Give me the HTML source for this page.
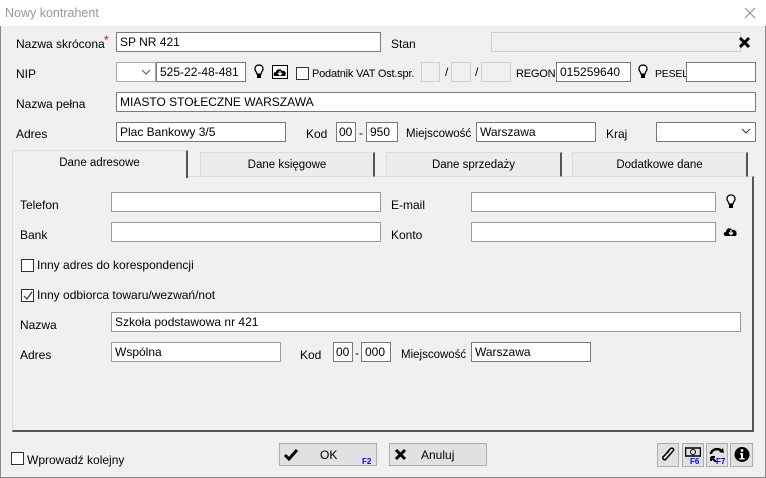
<!DOCTYPE html>
<html><head><meta charset="utf-8"><style>
*{box-sizing:border-box;margin:0;padding:0}
body{width:766px;height:478px;overflow:hidden;background:#f0f0f0;font-family:"Liberation Sans",sans-serif;font-size:12px;color:#000;position:relative}
.a{position:absolute}
.l{position:absolute;white-space:nowrap;line-height:14px}
.i{position:absolute;background:#fff;border:1px solid #7a7a7a;height:20px;font-size:12px;padding:1px 0 0 3px;line-height:16px;white-space:nowrap;overflow:hidden}
.d{position:absolute;background:#f0f0f0;border:1px solid #cfcfcf;height:20px}
.cb{position:absolute;width:13px;height:13px;border:1px solid #333;background:#fff}
.tab{position:absolute;top:152px;height:25px;background:#ececec;border:1px solid #ddd;border-right:2px solid #555;text-align:center;line-height:24px;font-size:11.5px}
.btn{position:absolute;background:#e1e1e1;border:1px solid #adadad}
</style></head><body>
<div class="a" style="left:0;top:0;width:766px;height:26px;background:#fff"></div>
<div class="l" style="left:5px;top:6px;color:#999;font-size:12.5px">Nowy kontrahent</div>
<svg class="a" style="left:744px;top:7px" width="12" height="12"><path d="M1 1L11 11M11 1L1 11" stroke="#888" stroke-width="1"/></svg>
<div class="a" style="left:0;top:26px;width:1px;height:452px;background:#888"></div>
<div class="a" style="left:765px;top:26px;width:1px;height:452px;background:#888"></div>
<div class="a" style="left:0;top:477px;width:766px;height:1px;background:#888"></div>

<div class="l" style="left:16px;top:37px">Nazwa skrócona</div>
<div class="l" style="left:104px;top:33px;color:#e00">*</div>
<div class="i" style="left:116px;top:32px;width:265px">SP NR 421</div>
<div class="l" style="left:391px;top:37px">Stan</div>
<div class="d" style="left:491px;top:32px;width:250px"></div>
<svg class="a" style="left:738px;top:36px" width="13" height="13"><path d="M2 2L11 11M11 2L2 11" stroke="#000" stroke-width="3"/></svg>

<div class="l" style="left:16px;top:67px">NIP</div>
<div class="i" style="left:116px;top:62px;width:40px;border-color:#aaa"></div>
<svg class="a" style="left:141px;top:68px" width="10" height="8"><path d="M1 2L5 6L9 2" stroke="#555" fill="none"/></svg>
<div class="i" style="left:156px;top:62px;width:90px">525-22-48-481</div>
<svg class="a" style="left:254px;top:64px" width="10" height="16"><path d="M5 1C2 1 1 3 1 5C1 7 3 8 3 10H7C7 8 9 7 9 5C9 3 8 1 5 1Z" fill="#fff" stroke="#000" stroke-width="1.3"/><rect x="3" y="10" width="4" height="4" fill="#000"/></svg>
<svg class="a" style="left:272px;top:65px" width="16" height="14"><rect x="0.5" y="0.5" width="15" height="13" fill="#fff" stroke="#000"/><path d="M3 11C1 11 1 7 4 7C4 4 9 3 10 6C13 5 15 8 13 11Z" fill="#000"/><path d="M8 6V10M6 8L8 10L10 8" stroke="#fff" stroke-width="1.3" fill="none"/></svg>
<div class="cb" style="left:296px;top:67px"></div>
<div class="l" style="left:312px;top:67px;font-size:11px;letter-spacing:-0.2px">Podatnik VAT Ost.spr.</div>
<div class="d" style="left:421px;top:62px;width:19px"></div>
<div class="l" style="left:445px;top:65px">/</div>
<div class="d" style="left:451px;top:62px;width:20px"></div>
<div class="l" style="left:475px;top:65px">/</div>
<div class="d" style="left:481px;top:62px;width:30px"></div>
<div class="l" style="left:516px;top:67px;font-size:11px;letter-spacing:-0.2px">REGON</div>
<div class="i" style="left:556px;top:62px;width:75px">015259640</div>
<svg class="a" style="left:638px;top:64px" width="10" height="16"><path d="M5 1C2 1 1 3 1 5C1 7 3 8 3 10H7C7 8 9 7 9 5C9 3 8 1 5 1Z" fill="#fff" stroke="#000" stroke-width="1.3"/><rect x="3" y="10" width="4" height="4" fill="#000"/></svg>
<div class="l" style="left:655px;top:67px;font-size:10.5px;letter-spacing:-0.2px">PESEL</div>
<div class="i" style="left:686px;top:62px;width:70px"></div>

<div class="l" style="left:16px;top:97px">Nazwa pełna</div>
<div class="i" style="left:116px;top:92px;width:640px">MIASTO STOŁECZNE WARSZAWA</div>

<div class="l" style="left:16px;top:127px">Adres</div>
<div class="i" style="left:116px;top:122px;width:170px">Plac Bankowy 3/5</div>
<div class="l" style="left:306px;top:127px">Kod</div>
<div class="i" style="left:336px;top:122px;width:20px;padding-left:2px">00</div>
<div class="l" style="left:359px;top:126px">-</div>
<div class="i" style="left:366px;top:122px;width:32px">950</div>
<div class="l" style="left:406px;top:127px;font-size:11.5px">Miejscowość</div>
<div class="i" style="left:476px;top:122px;width:120px">Warszawa</div>
<div class="l" style="left:606px;top:127px">Kraj</div>
<div class="i" style="left:656px;top:122px;width:100px"></div>
<svg class="a" style="left:741px;top:127px" width="10" height="8"><path d="M1 2L5 6L9 2" stroke="#333" fill="none"/></svg>

<div class="a" style="left:12px;top:176px;width:742px;height:256px;border:1px solid #ddd;border-right:2px solid #555;border-bottom:2px solid #555"></div>
<div class="tab" style="left:200px;width:175px">Dane księgowe</div>
<div class="tab" style="left:386px;width:176px">Dane sprzedaży</div>
<div class="tab" style="left:572px;width:176px">Dodatkowe dane</div>
<div class="tab" style="left:12px;top:150px;height:28px;width:176px;background:#f0f0f0;border-bottom:none;line-height:24px">Dane adresowe</div>

<div class="l" style="left:20px;top:198px">Telefon</div>
<div class="i" style="left:111px;top:192px;width:270px;border-color:#999"></div>
<div class="l" style="left:391px;top:198px">E-mail</div>
<div class="i" style="left:471px;top:192px;width:245px;border-color:#999"></div>
<svg class="a" style="left:726px;top:194px" width="10" height="16"><path d="M5 1C2 1 1 3 1 5C1 7 3 8 3 10H7C7 8 9 7 9 5C9 3 8 1 5 1Z" fill="#fff" stroke="#000" stroke-width="1.3"/><rect x="3" y="10" width="4" height="4" fill="#000"/></svg>
<div class="l" style="left:20px;top:228px">Bank</div>
<div class="i" style="left:111px;top:222px;width:270px;border-color:#999"></div>
<div class="l" style="left:391px;top:228px">Konto</div>
<div class="i" style="left:471px;top:222px;width:245px;border-color:#999"></div>
<svg class="a" style="left:723px;top:226px" width="15" height="11"><path d="M3 10C0 10 0 6 3 6C3 2 8 1 9 4C12 3 15 6 13 10Z" fill="#000"/><path d="M8 4V8M6 6.5L8 8.5L10 6.5" stroke="#fff" stroke-width="1.3" fill="none"/></svg>

<div class="cb" style="left:21px;top:259px"></div>
<div class="l" style="left:37px;top:258px">Inny adres do korespondencji</div>
<div class="cb" style="left:21px;top:289px"></div>
<svg class="a" style="left:23px;top:291px" width="10" height="10"><path d="M1 5L4 8L9 1" stroke="#333" fill="none" stroke-width="1.2"/></svg>
<div class="l" style="left:37px;top:288px">Inny odbiorca towaru/wezwań/not</div>

<div class="l" style="left:20px;top:318px">Nazwa</div>
<div class="i" style="left:111px;top:312px;width:630px;border-color:#999">Szkoła podstawowa nr 421</div>
<div class="l" style="left:20px;top:348px">Adres</div>
<div class="i" style="left:111px;top:342px;width:170px;border-color:#999">Wspólna</div>
<div class="l" style="left:300px;top:348px">Kod</div>
<div class="i" style="left:333px;top:342px;width:20px;padding-left:2px">00</div>
<div class="l" style="left:355px;top:346px">-</div>
<div class="i" style="left:361px;top:342px;width:30px">000</div>
<div class="l" style="left:401px;top:348px;font-size:11.5px">Miejscowość</div>
<div class="i" style="left:471px;top:342px;width:120px">Warszawa</div>

<div class="cb" style="left:11px;top:452px;border-color:#333"></div>
<div class="l" style="left:27px;top:453px">Wprowadź kolejny</div>

<div class="btn" style="left:279px;top:443px;width:98px;height:23px"></div>
<svg class="a" style="left:283px;top:448px" width="16" height="13"><path d="M2 7L6 11L14 2" stroke="#000" stroke-width="3" fill="none"/></svg>
<div class="l" style="left:320px;top:448px">OK</div>
<div class="l" style="left:362px;top:455px;font-size:8px;color:#00f;font-weight:bold">F2</div>
<div class="btn" style="left:389px;top:443px;width:98px;height:23px"></div>
<svg class="a" style="left:394px;top:448px" width="13" height="13"><path d="M2 2L11 11M11 2L2 11" stroke="#000" stroke-width="3"/></svg>
<div class="l" style="left:421px;top:448px">Anuluj</div>

<div class="btn" style="left:657px;top:443px;width:22px;height:24px"></div>
<svg class="a" style="left:660px;top:446px" width="16" height="18"><path d="M5 9L10 3C12 1 15 3 13 5L6 13C5 15 2 13 3 11L9 5" stroke="#000" stroke-width="1.5" fill="none"/></svg>
<div class="btn" style="left:682px;top:443px;width:22px;height:24px"></div>
<svg class="a" style="left:685px;top:447px" width="16" height="10"><rect x="0.5" y="1" width="15" height="8" fill="none" stroke="#000" stroke-width="1.5"/><circle cx="8" cy="5" r="2.5" fill="none" stroke="#000"/></svg>
<div class="l" style="left:690px;top:455px;font-size:8px;color:#00f;font-weight:bold">F6</div>
<div class="btn" style="left:706px;top:443px;width:22px;height:24px"></div>
<svg class="a" style="left:709px;top:446px" width="16" height="16"><path d="M2 8C2 3 11 1 13 6" stroke="#000" stroke-width="2.5" fill="none"/><path d="M10 6L15 7L14 2Z" fill="#000"/><path d="M2 11L7 16M2 11V15M2 11H6" stroke="#000" stroke-width="2"/></svg>
<div class="l" style="left:716px;top:455px;font-size:8px;color:#00f;font-weight:bold">F7</div>
<div class="btn" style="left:730px;top:443px;width:23px;height:24px"></div>
<svg class="a" style="left:734px;top:446px" width="16" height="17"><circle cx="8" cy="8.5" r="7.5" fill="#000"/><circle cx="8" cy="4.5" r="1.4" fill="#fff"/><path d="M6 7H9V12H10.5V13.5H5.5V12H7V8.5H6Z" fill="#fff"/></svg>
</body></html>
